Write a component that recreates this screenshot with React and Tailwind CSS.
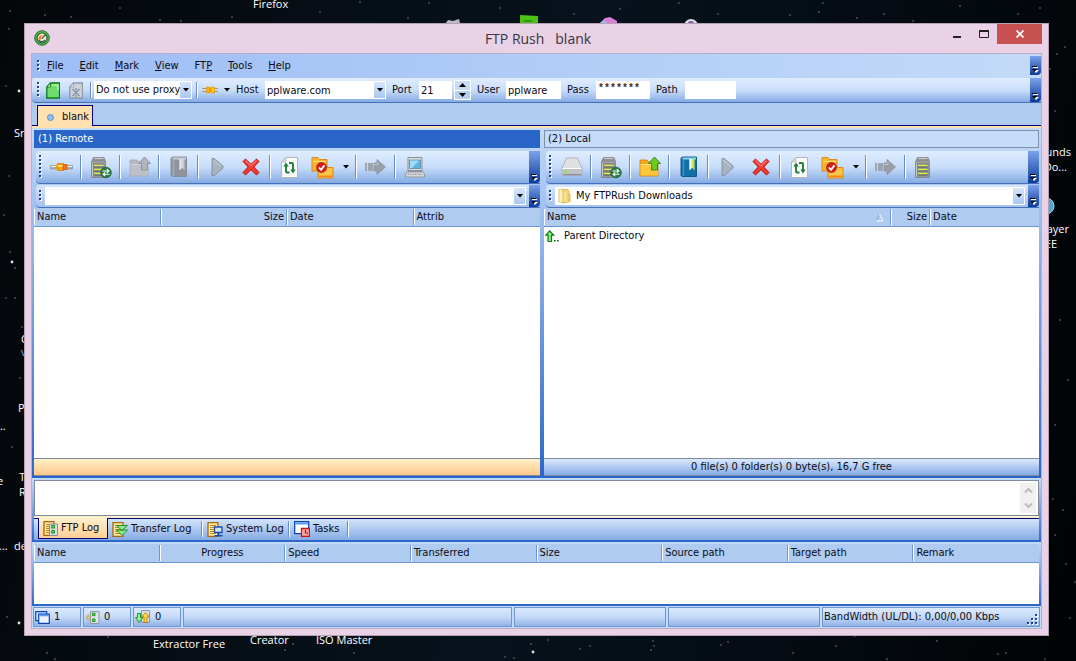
import React from "react";

/* ---------- desktop ---------- */

const STARS = [
  [10, 11, 1], [45, 15, 1], [9, 29, 1], [160, 20, 1], [232, 17, 1], [181, 21, 1], [71, 17, 1], [360, 2, 1], [429, 3, 1],
  [408, 18, 1], [574, 14, 1], [679, 3, 1], [718, 14, 1], [790, 15, 1], [819, 12, 1], [884, 14, 1], [857, 18, 1],
  [1018, 14, 1], [823, 3, 1], [913, 21, 1], [1057, 54, 1], [1065, 47, 1], [1055, 111, 1], [1050, 69, 1], [19, 91, 2], [6, 86, 1],
  [12, 262, 2], [10, 252, 1], [15, 268, 1], [6, 298, 1], [15, 298, 1], [22, 327, 1], [19, 623, 2], [7, 617, 1],
  [47, 653, 1], [55, 659, 1], [108, 637, 1], [285, 650, 1], [293, 644, 1], [354, 653, 1], [533, 652, 2], [548, 640, 1],
  [531, 644, 1], [580, 649, 1], [590, 646, 1], [653, 641, 1], [654, 646, 1], [651, 650, 1], [505, 657, 1], [514, 658, 1],
  [721, 645, 1], [728, 642, 1], [793, 653, 1], [836, 646, 1], [855, 636, 1], [887, 659, 1], [937, 641, 1],
  [998, 654, 1], [1006, 653, 1], [1045, 659, 1], [1063, 510, 1], [1053, 499, 1], [1075, 582, 1], [1066, 564, 1],
  [1055, 535, 1], [1070, 618, 1], [1060, 320, 1], [1068, 380, 1], [1055, 425, 1], [20, 378, 1], [12, 447, 1], [4, 215, 1],
  [9, 176, 1], [120, 8, 1], [320, 12, 1], [500, 8, 1], [960, 6, 1], [1040, 8, 1], [620, 9, 1],
];

function Desktop() {
  const label = "absolute text-center text-[11px] leading-[15px] whitespace-nowrap";
  return (
    <div className="absolute inset-0 overflow-hidden bg-[linear-gradient(100deg,#04070a_0%,#060d14_25%,#07121c_50%,#040a10_80%,#010203_100%)] font-['Open_Sans',sans-serif] text-white">
      <svg className="absolute inset-0" width="1076" height="661" aria-hidden="true">
        {STARS.map(([x, y, r], i) => (
          <circle key={i} cx={x} cy={y} r={r * 0.7} fill={r > 1 ? "#d5e2ee" : "#8795a3"} />
        ))}
        <path d="M446 23l2-3 5 1 6-2 1 4z" fill="#b9bcc0" />
        <path d="M520 15l18 1v8h-18z" fill="#4cc417" />
        <path d="M524 21h8" stroke="#1d6a06" strokeWidth="1" />
        <path d="M600 23l5-5 5-1 7 4v2z" fill="#d87fd8" />
        <path d="M600 23l4-3 3 3z" fill="#8fc4ec" />
        <circle cx="691" cy="26" r="7" fill="#dcdce4" />
        <circle cx="691" cy="24" r="3" fill="#7b5ba8" />
        <circle cx="1046" cy="206" r="8" fill="#49a9cf" stroke="#a9d9ea" />
      </svg>
      <span className={`${label} left-[253px] -top-[4px]`}>Firefox</span>
      <span className={`${label} left-[153px] top-[636px]`}>Extractor Free</span>
      <span className={`${label} left-[250px] top-[632px]`}>Creator</span>
      <span className={`${label} left-[316px] top-[632px]`}>ISO Master</span>
      <span className={`${label} left-[14px] top-[125px]`}>Sr</span>
      <span className={`${label} left-[21px] top-[331px]`}>C</span>
      <span className={`${label} left-[21px] top-[344px] text-[#6db6e8]`}>v</span>
      <span className={`${label} left-[18px] top-[400px]`}>P</span>
      <span className={`${label} -left-[3px] top-[418px]`}>...</span>
      <span className={`${label} -left-[3px] top-[473px]`}>e</span>
      <span className={`${label} left-[19px] top-[469px]`}>T<br />R</span>
      <span className={`${label} -left-[1px] top-[538px]`}>...</span>
      <span className={`${label} left-[14px] top-[538px]`}>de</span>
      <span className={`${label} right-[5px] top-[144px]`}>Sounds</span>
      <span className={`${label} right-[9px] top-[159px]`}>Do...</span>
      <span className={`${label} right-[7px] top-[221px]`}>Player</span>
      <span className={`${label} right-[19px] top-[236px]`}>FREE</span>
    </div>
  );
}

/* ---------- small parts ---------- */

function Grip({ dots = 4 }) {
  return (
    <svg className="shrink-0" width="4" height={dots * 4} aria-hidden="true">
      {Array.from({ length: dots }, (_, i) => (
        <g key={i}>
          <rect x="1" y={i * 4 + 1} width="2" height="2" fill="#fff" />
          <rect x="0" y={i * 4} width="2" height="2" fill="#27418a" />
        </g>
      ))}
    </svg>
  );
}

function Caret() {
  return (
    <svg width="6" height="4" aria-hidden="true">
      <path d="M0 0h6L3 3.500z" fill="#000" />
    </svg>
  );
}

function Sep() {
  return <span className="mx-[2px] h-6 w-[2px] shrink-0 border-l border-r border-l-[#6a8ccb] border-r-white" />;
}

function Overflow({ className = "" }) {
  return (
    <button
      aria-label="Toolbar options"
      className={`flex w-[11px] shrink-0 items-end justify-center self-stretch rounded-br-sm bg-gradient-to-b from-[#7ba2ec] to-[#0a3a98] pb-[2px] ${className}`}
    >
      <svg width="7" height="7" aria-hidden="true">
        <path d="M1 1.500h5" stroke="#fff" />
        <path d="M0 .5h5" stroke="#000" />
        <path d="M1 4h6L4 7z" fill="#fff" />
        <path d="M0 3h5L2.500 6z" fill="#000" />
      </svg>
    </button>
  );
}

function DropCap() {
  return (
    <span className="pointer-events-none absolute inset-y-[1px] right-[1px] flex w-[11px] items-center justify-center bg-gradient-to-b from-[#d6e6fc] to-[#aac8f0]">
      <Caret />
    </span>
  );
}

/* ---------- icons ---------- */

const PlugIcon = () => (
  <svg width="23" height="12" viewBox="0 0 23 12" aria-hidden="true">
    <path d="M.4 4.500h6v3.500h-6zM16.500 4.500h6v3.500h-6z" fill="#a9adb2" stroke="#85898f" strokeWidth=".6" />
    <path d="M1 5.500h5M17 5.500h5" stroke="#f1f2f3" />
    <path d="M6 3.500h2v5H6z" fill="#f8a514" />
    <path d="M7.500 2.500h6v7h-6z" fill="#f9a01a" stroke="#e07a08" strokeWidth=".8" />
    <path d="M13 3.500h4v5h-4z" fill="#f0701a" stroke="#d05a06" strokeWidth=".8" />
    <path d="M7.500 5h5" stroke="#ffe88a" strokeWidth="1.500" />
  </svg>
);

const SmallPlugIcon = () => (
  <svg width="16" height="10" viewBox="0 0 16 10" aria-hidden="true">
    <path d="M0 3.500h5M0 6.500h5M11 3.500h5M11 6.500h5" stroke="#a39a86" />
    <path d="M4.500 2h3v6h-3z" fill="#ffb400" stroke="#e08a00" strokeWidth=".6" />
    <path d="M9 2h3.500v6H9z" fill="#ffcc00" stroke="#e08a00" strokeWidth=".6" />
    <path d="M7.500 3h1.500v4H7.500z" fill="#ff8a00" />
  </svg>
);

const ServerIcon = ({ sync }) => (
  <svg width="22" height="23" viewBox="0 0 22 23" aria-hidden="true">
    <path d="M3.500 1.500h10.500l1.500 4.500v15.500h-14V6z" fill="#9fa1a4" stroke="#7a7d80" strokeWidth=".8" />
    <path d="M3.500 1.500h10.500l1.500 4h-14z" fill="#8b8d90" />
    <path d="M4 2.500h9.500" stroke="#c8cacc" strokeWidth="1.200" />
    <path d="M2.500 7h12v13.500h-12z" fill="#85878a" />
    <path d="M2.500 7v13.500" stroke="#c4c6c8" />
    <path d="M4 9.500h9.500M4 13.500h9.500M4 17.500h9.500" stroke="#dff04a" strokeWidth="1.500" />
    <path d="M4 11h9.500M4 15h9.500M4 19h9.500" stroke="#5c5f62" strokeWidth=".8" />
    {sync && (
      <g>
        <circle cx="16" cy="16.500" r="5.300" fill="#2a7d40" stroke="#14592a" strokeWidth=".7" />
        <path d="M12.500 15H18M16.800 13.100L19 15l-2.200 1.900M19.500 18.300H14M15.200 16.500L13 18.300l2.200 1.900" fill="none" stroke="#fff" strokeWidth="1.100" />
      </g>
    )}
  </svg>
);

const FolderUpIcon = ({ off }) => (
  <svg width="22" height="22" viewBox="0 0 22 22" aria-hidden="true">
    <path d="M1 4h7l2 2h9v14H1z" fill={off ? "#b4b9c1" : "#f3a81b"} stroke={off ? "#a3a9b2" : "#cf7f0a"} strokeWidth=".8" />
    <path d="M1.500 8h17.500v11.500H1.500z" fill={off ? "#bcc1c9" : "#fdc73c"} />
    <path d="M2 8.500h16" stroke={off ? "#d3d7dd" : "#ffe68d"} />
    <path d="M15.500 1l6 6.500h-3V14h-6V7.500h-3z" fill={off ? "#b0b5bd" : "#6ccc24"} stroke={off ? "#8b919b" : "#2c860f"} strokeWidth=".9" />
  </svg>
);

const BookIcon = ({ off }) => (
  <svg width="18" height="22" viewBox="0 0 18 22" aria-hidden="true">
    <path d="M1 2.500C1 1.500 2 1 3 1h13.500v19.500H3c-1 0-2-.5-2-1.500z" fill={off ? "#8f949c" : "#126fa8"} stroke={off ? "#858b95" : "#0a5484"} strokeWidth=".9" />
    <path d="M2.500 1.500h13.500v2H2.500z" fill={off ? "#c7ccd3" : "#8dd4f0"} />
    <path d="M3.500 4v16" stroke={off ? "#a8adb5" : "#3499cf"} strokeWidth="1.500" />
    <path d="M9.500 3h5v11.500L12 11.500l-2.500 3z" fill={off ? "#cdd1d7" : "#c9e84f"} />
    <path d="M9.500 3h2v9.200l-2 1.800z" fill={off ? "#e2e5e9" : "#fff"} />
  </svg>
);

const PlayIcon = () => (
  <svg width="13" height="20" viewBox="0 0 13 20" aria-hidden="true">
    <path d="M1 1.500h2l9 7.500v2l-9 7.500H1z" fill="#a9b3c2" stroke="#828c9b" strokeWidth=".9" />
    <path d="M2 3l8 6.500" stroke="#ccd3dd" />
  </svg>
);

const DeleteIcon = () => (
  <svg width="18" height="18" viewBox="0 0 18 18" aria-hidden="true">
    <path d="M3.500 1L9 6.300 14.500 1 17 3.500 11.800 9 17 14.500 14.500 17 9 11.700 3.500 17 1 14.500 6.200 9 1 3.500z" fill="#ee3a32" stroke="#c01613" strokeWidth="1" strokeLinejoin="round" />
    <path d="M3.500 2.600L9 8l5.500-5.400" fill="none" stroke="#ff8178" strokeWidth="1.100" />
  </svg>
);

const RefreshDocIcon = () => (
  <svg width="17" height="21" viewBox="0 0 17 21" aria-hidden="true">
    <path d="M5 .5h11.500v20H.5V5z" fill="#fbfbfa" stroke="#b3b6b8" />
    <path d="M5 .5V5H.5z" fill="#d9dbdc" stroke="#b3b6b8" strokeWidth=".7" />
    <path d="M8.500 15.500H6c-.8 0-1-.4-1-1V8M8 6h3c.8 0 1 .4 1 1v7" fill="none" stroke="#1c7f3a" strokeWidth="1.900" />
    <path d="M2.300 9.500L5 5.500l2.700 4zM9.300 12.500l2.700 4 2.700-4z" fill="#1c7f3a" />
  </svg>
);

const FolderCheckIcon = () => (
  <svg width="23" height="23" viewBox="0 0 23 23" aria-hidden="true">
    <path d="M1 1.500h6L8.500 3.500H16v11.500H1z" fill="#fbb62a" stroke="#dd8212" strokeWidth=".9" />
    <path d="M2 5.500h13" stroke="#ffe08a" />
    <path d="M7 9.500h5l1.500 2H22v10.500H7z" fill="#fdc541" stroke="#dd8212" strokeWidth=".9" />
    <path d="M8 19.500h13.500v1.500H8z" fill="#f28c18" />
    <circle cx="10.500" cy="11.500" r="5" fill="#d61f1a" stroke="#a01512" strokeWidth=".7" />
    <path d="M7.800 11.500l2.200 2.300 3.400-4.400" fill="none" stroke="#fff" strokeWidth="1.800" />
  </svg>
);

const ArrowIcon = () => (
  <svg width="23" height="18" viewBox="0 0 23 18" aria-hidden="true">
    <path d="M1 5h2v8H1zM4 5h5v8H4z" fill="#9da5b0" />
    <path d="M10 5h3V1.500l8.500 7.500-8.500 7.500V13h-3z" fill="#989fa9" stroke="#8a919c" strokeWidth=".8" />
    <path d="M10 6.500h4V4" fill="none" stroke="#c0c6ce" />
  </svg>
);

const ComputerIcon = () => (
  <svg width="20" height="22" viewBox="0 0 20 22" aria-hidden="true">
    <path d="M3 1.500h14v13H3z" fill="#dcdee0" stroke="#8b8e92" />
    <path d="M4.500 4h11v8.500h-11z" fill="#5cb6e4" stroke="#4d7d9e" strokeWidth=".7" />
    <path d="M5 4.500h9l-7 7.500H5z" fill="#a3daf4" />
    <path d="M2 15.500h16l1.500 3v2.500H.5v-2.500z" fill="#d7d9db" stroke="#85888c" strokeWidth=".8" />
    <path d="M3 16.700h14M2.500 18.500h15" stroke="#9a9ea3" strokeDasharray="1.500 .8" />
  </svg>
);

const DriveIcon = () => (
  <svg width="22" height="20" viewBox="0 0 22 20" aria-hidden="true">
    <path d="M5.500 1h11l4.500 10v6a1.500 1.500 0 0 1-1.500 1.500h-17A1.500 1.500 0 0 1 1 17v-6z" fill="#dfe0e1" stroke="#a4a7ab" strokeWidth=".8" />
    <path d="M1.400 11.500h19.200v5.500a1 1 0 0 1-1 1h-17.200a1 1 0 0 1-1-1z" fill="#bfc2c5" />
    <path d="M1.500 11.500h19" stroke="#fff" />
    <path d="M1.500 17.700h19" stroke="#85888c" />
    <circle cx="4.500" cy="14.500" r="1.300" fill="#8de62c" />
  </svg>
);

const FolderIcon = () => (
  <svg width="14" height="16" viewBox="0 0 14 16" aria-hidden="true">
    <path d="M1 1.500L6 1v14l-5-1z" fill="#fdf0b4" stroke="#d9b654" strokeWidth=".8" />
    <path d="M5 1.500h5l1 2V14l-6 1z" fill="#f2d675" stroke="#d9b654" strokeWidth=".8" />
    <path d="M11 6h1.500v8H11z" fill="#e4bf55" />
    <path d="M7 4v9" stroke="#fff3bd" />
  </svg>
);

const DocIcon = ({ off }) => (
  <svg width="14" height="17" viewBox="0 0 14 17" aria-hidden="true">
    <path d="M4.500 1h9v15H.8V5z" fill={off ? "#ccd3dc" : "#6fdc6c"} stroke={off ? "#8d98a6" : "#0b7a17"} strokeWidth="1.300" />
    <path d="M4.500 1v4H.8z" fill={off ? "#f2f4f6" : "#d2f7cf"} stroke={off ? "#8d98a6" : "#0b7a17"} strokeWidth=".8" />
    {off ? (
      <path d="M3.500 7l7 7M10.500 7l-7 7M7 6v2M7 13v2" stroke="#8c96a3" strokeWidth="1.600" />
    ) : (
      <path d="M6 3h6v5" fill="none" stroke="#b4f5ac" strokeWidth="1.500" />
    )}
  </svg>
);

const AppIcon = () => (
  <svg width="16" height="16" viewBox="0 0 16 16" aria-hidden="true">
    <circle cx="8" cy="8" r="7.300" fill="#58b950" stroke="#2b7431" strokeWidth="1" />
    <circle cx="8" cy="8" r="5" fill="#f1f4ec" stroke="#1c6426" strokeWidth="1.200" />
    <path d="M11.500 4.500L8 8.500M11 9.800A3.500 3.500 0 0 1 5 10" fill="none" stroke="#494d48" strokeWidth="1.200" />
    <path d="M4.500 10c-.3-3.500 1.500-5.300 5-5.500L7 6.500 8 9z" fill="#f47c1b" />
  </svg>
);

const LogSheet = () => (
  <g>
    <path d="M1 .7h10v13.600H1z" fill="#ffe9a6" stroke="#a8690e" strokeWidth="1.300" />
    <path d="M3 3.500h6M3 5.500h6M3 7.500h6M3 9.500h6M3 11.500h6" stroke="#c98618" />
  </g>
);

const FtpLogIcon = () => (
  <svg width="15" height="15" viewBox="0 0 15 15" aria-hidden="true">
    <LogSheet />
    <path d="M6.500 3h8v11.500h-8z" fill="#d6dbe0" stroke="#8b939b" />
    <path d="M8.800 4.500h2.600v2.600H8.800zM8.800 9.500h2.600v2.600H8.800z" fill="#5fe064" stroke="#0c8a16" strokeWidth=".9" />
  </svg>
);

const TransferLogIcon = () => (
  <svg width="16" height="15" viewBox="0 0 16 15" aria-hidden="true">
    <LogSheet />
    <path d="M4.500 3.500h11L10 8.500zM4.500 8h11L10 13.500z" fill="#8deb89" stroke="#128a20" strokeWidth=".9" />
  </svg>
);

const SystemLogIcon = () => (
  <svg width="16" height="15" viewBox="0 0 16 15" aria-hidden="true">
    <LogSheet />
    <path d="M7.500 5h7.500v5.500H7.500z" fill="#cfe4ff" stroke="#1b4db0" strokeWidth="1.300" />
    <path d="M11.500 11v2M7.500 13.700h8" stroke="#1b4db0" strokeWidth="1.500" />
  </svg>
);

const TasksIcon = () => (
  <svg width="16" height="16" viewBox="0 0 16 16" aria-hidden="true">
    <path d="M.7.7h14v12H.7z" fill="#fff" stroke="#0d47b5" strokeWidth="1.300" />
    <path d="M1.300 1.300h12.800v2.200H1.300z" fill="#5e9bf2" />
    <path d="M7.500 7.500h8v8h-8z" fill="#f8aaa6" stroke="#d01414" strokeWidth="1.300" />
    <path d="M11.500 9v3h2.500" fill="none" stroke="#b30d0d" strokeWidth="1.200" />
  </svg>
);

const WindowsIcon = () => (
  <svg width="15" height="13" viewBox="0 0 15 13" aria-hidden="true">
    <path d="M.7.7h11v9h-11z" fill="#cfe2ff" stroke="#0d47b5" strokeWidth="1.200" />
    <path d="M3.700 3.200h10.600v9.100H3.700z" fill="#eef5ff" stroke="#0d47b5" strokeWidth="1.200" />
    <path d="M4.300 4.500h9.400" stroke="#5e9bf2" strokeWidth="1.600" />
  </svg>
);

const ConnIcon = () => (
  <svg width="15" height="13" viewBox="0 0 15 13" aria-hidden="true">
    <path d="M5.500.6h8.500v11.800H5.500z" fill="#dfe4e8" stroke="#8b939b" />
    <path d="M7.500 2.200h2.500v2.500H7.500zM7.500 8h2.500v2.500H7.500z" fill="#5fe064" stroke="#0c8a16" strokeWidth=".9" />
    <path d="M4 3.500L1 6.500l3 3M2 5.200h2.500M2 7.800h2.500" fill="none" stroke="#d69a06" />
  </svg>
);

const UpDownIcon = () => (
  <svg width="16" height="14" viewBox="0 0 16 14" aria-hidden="true">
    <path d="M6.500.6h8v11.800h-8z" fill="#dfe4e8" stroke="#8b939b" />
    <path d="M2.500 3.500h3v4H8L4 12.500 .5 7.500h2z" fill="#9af08e" stroke="#128a20" strokeWidth=".9" />
    <path d="M9 12.500h3V7h2.500l-4-4.500-4 4.500H9z" fill="#ffd54a" stroke="#b9780b" strokeWidth=".9" />
  </svg>
);

const ParentIcon = () => (
  <svg width="14" height="13" viewBox="0 0 14 13" aria-hidden="true">
    <path d="M4.700 1l4 4.200H6.500V11.500H3V5.200H.8z" fill="#8ae884" stroke="#0d7d1b" strokeWidth="1.200" />
    <path d="M9 10h1.600v1.600H9zM12 10h1.600v1.600H12z" fill="#0a6a16" />
  </svg>
);

/* ---------- top bars ---------- */

const MENUS = [["F", "ile"], ["E", "dit"], ["M", "ark"], ["V", "iew"], ["FT", "P"], ["T", "ools"], ["H", "elp"]];

function MenuBar() {
  return (
    <nav className="flex h-6 items-center bg-gradient-to-r from-[#9ebdf5] to-[#c3daf8] pl-[5px]">
      <Grip dots={3} />
      <div className="flex flex-1 gap-4 pl-[6px]">
        {MENUS.map(([a, b]) => (
          <button key={a + b}>
            {a === "FT" ? <>FT<u>P</u></> : <><u>{a}</u>{b}</>}
          </button>
        ))}
      </div>
      <Overflow className="mt-[2px] mb-[3px]" />
    </nav>
  );
}

const field = "h-[18px] bg-white px-[2px] outline-none";

function QuickConnect() {
  return (
    <div className="flex h-[25px] items-center rounded-l border-b border-[#4671b8] bg-[linear-gradient(#dfecfe,#cadefa_50%,#85abe4)] pl-[5px]">
      <Grip dots={4} />
      <button aria-label="New" className="ml-1 flex w-[15px] justify-center"><DocIcon /></button>
      <button aria-label="Close" className="ml-2 mr-[7px] flex w-[15px] justify-center"><DocIcon off /></button>
      <span className="h-4 w-[2px] shrink-0 border-l border-r border-l-[#6a8ccb] border-r-white" />
      <div className="relative ml-[2px] w-[98px]">
        <select aria-label="Proxy" className={`${field} block w-full appearance-none whitespace-nowrap`}>
          <option>Do not use proxy</option>
        </select>
        <DropCap />
      </div>
      <span className="ml-1 mr-1 h-4 w-[2px] shrink-0 border-l border-r border-l-[#6a8ccb] border-r-white" />
      <button aria-label="Connect" className="flex w-[32px] items-center gap-[6px]">
        <SmallPlugIcon />
        <Caret />
      </button>
      <label htmlFor="host" className="w-[31px] pl-[2px]">Host</label>
      <div className="relative w-[121px]">
        <input id="host" className={`${field} block w-full pr-4`} defaultValue="pplware.com" />
        <DropCap />
      </div>
      <label htmlFor="port" className="ml-[6px] w-[27px]">Port</label>
      <input id="port" className={`${field} w-[33px]`} defaultValue="21" />
      <div className="ml-[2px] flex h-5 w-[17px] flex-col gap-[1px] border border-white bg-white">
        <button aria-label="Increase port" className="flex flex-1 items-center justify-center bg-[#c8dcf8]">
          <svg width="7" height="4" aria-hidden="true"><path d="M0 4h7L3.500 0z" /></svg>
        </button>
        <button aria-label="Decrease port" className="flex flex-1 items-center justify-center bg-[#b5cff3]">
          <svg width="7" height="4" aria-hidden="true"><path d="M0 0h7L3.500 4z" /></svg>
        </button>
      </div>
      <label htmlFor="user" className="ml-[6px] w-[29px]">User</label>
      <input id="user" className={`${field} w-[55px]`} defaultValue="pplware" />
      <label htmlFor="pass" className="ml-[6px] w-[29px]">Pass</label>
      <input id="pass" className={`${field} w-[54px] pb-1 font-['Liberation_Mono',monospace] text-[10px] font-bold text-[#4a2a10]`} defaultValue="*******" />
      <label htmlFor="path" className="ml-[6px] w-[29px]">Path</label>
      <input id="path" className={`${field} w-[51px]`} defaultValue="" />
      <Overflow className="ml-auto" />
    </div>
  );
}

/* ---------- panes ---------- */

function ToolButton({ name, children }) {
  return (
    <button aria-label={name} className="flex h-full w-[33px] shrink-0 items-center justify-center">
      {children}
    </button>
  );
}

function PaneToolbar({ local }) {
  return (
    <div className="mt-[3px] ml-[2px] flex h-[33px] items-center rounded-l border-b border-[#4671b8] bg-[linear-gradient(#e0edff,#c8ddfa_50%,#85abe4)] pl-[3px]">
      <div className="w-[6px] shrink-0"><Grip dots={6} /></div>
      <ToolButton name={local ? "Drives" : "Connect"}>{local ? <DriveIcon /> : <PlugIcon />}</ToolButton>
      <Sep />
      <ToolButton name="Sites"><ServerIcon sync /></ToolButton>
      <Sep />
      <ToolButton name="Parent folder"><FolderUpIcon off={!local} /></ToolButton>
      <Sep />
      <ToolButton name="Bookmarks"><BookIcon off={!local} /></ToolButton>
      <Sep />
      <ToolButton name="Start"><PlayIcon /></ToolButton>
      <ToolButton name="Delete"><DeleteIcon /></ToolButton>
      <Sep />
      <ToolButton name="Refresh"><RefreshDocIcon /></ToolButton>
      <ToolButton name="Select"><FolderCheckIcon /></ToolButton>
      <button aria-label="Select options" className="flex h-full w-[14px] shrink-0 items-center justify-center"><Caret /></button>
      <Sep />
      <ToolButton name="Transfer"><ArrowIcon /></ToolButton>
      <Sep />
      <ToolButton name={local ? "Server" : "Computer"}>{local ? <ServerIcon /> : <ComputerIcon />}</ToolButton>
      <Overflow className="ml-auto" />
    </div>
  );
}

function AddressBar({ local }) {
  return (
    <div className="mt-[1px] ml-[2px] flex h-[23px] items-center rounded-l border-b border-[#4671b8] bg-[linear-gradient(#d6e6fd,#a3c1ee)] pl-[3px]">
      <Grip dots={3} />
      <div className="relative ml-[2px] mr-[3px] flex h-[18px] flex-1 items-center bg-white">
        {local && <span className="pl-[3px]"><FolderIcon /></span>}
        <select aria-label={local ? "Local folder" : "Remote folder"} className="h-full flex-1 appearance-none pl-1 outline-none">
          <option>{local ? "My FTPRush Downloads" : ""}</option>
        </select>
        <DropCap />
      </div>
      <Overflow />
    </div>
  );
}

function HeadCell({ children, align = "justify-start", sorted, first }) {
  return (
    <th scope="col" className="h-[19px] border-b border-[#6b94d9] bg-[#b0cbf0] p-0 font-normal">
      <div className={`flex h-4 items-center border-l border-white pr-[3px] pl-[2px] ${align} ${first ? "" : "shadow-[-1px_0_0_#6b94d9]"}`}>
        {children}
        {sorted && (
          <svg className="mr-1 ml-auto" width="9" height="9" aria-hidden="true">
            <path d="M4.500 1L1 8" fill="none" stroke="#7f9fd4" />
            <path d="M4.500 1L8 8H1" fill="none" stroke="#fff" />
          </svg>
        )}
      </div>
    </th>
  );
}

function Pane({ local }) {
  const cols = local
    ? [["Name", "w-[70%]"], ["Size", "w-[8%]"], ["Date", "w-[22%]"]]
    : [["Name", "w-[25%]"], ["Size", "w-[25%]"], ["Date", "w-[25%]"], ["Attrib", "w-[25%]"]];
  return (
    <section className="flex min-w-0 flex-col">
      <h2 className={`flex h-[18px] shrink-0 items-center px-1 ${local ? "border border-[#7f8fa9] bg-[#c4dbf9] pl-[3px]" : "bg-[#2a66c9] text-white"}`}>
        {local ? "(2) Local" : "(1) Remote"}
      </h2>
      <PaneToolbar local={local} />
      <AddressBar local={local} />
      <div className="flex-1 bg-white">
        <table className="w-full table-fixed border-separate border-spacing-0">
          <colgroup>{cols.map(([n, w]) => <col key={n} className={w} />)}</colgroup>
          <thead>
            <tr>
              {cols.map(([n], i) => (
                <HeadCell key={n} first={i === 0} sorted={local && i === 0} align={n === "Size" ? "justify-end" : "justify-start"}>
                  {n}
                </HeadCell>
              ))}
            </tr>
          </thead>
          <tbody>
            {local && (
              <tr>
                <td className="h-[18px] p-0">
                  <div className="flex items-center gap-[5px] pl-[1px]"><ParentIcon />Parent Directory</div>
                </td>
                <td /><td />
              </tr>
            )}
          </tbody>
        </table>
      </div>
      <div className={`flex h-[18px] shrink-0 items-center justify-center border-y border-[#7f8b9d] ${local ? "bg-gradient-to-b from-[#dae9fd] to-[#85abe4]" : "bg-gradient-to-b from-[#fff0c8] to-[#ffc98a]"}`}>
        {local && "0 file(s) 0 folder(s) 0 byte(s), 16,7 G free"}
      </div>
    </section>
  );
}

/* ---------- bottom ---------- */

const frame = "bg-gradient-to-b from-[#c4dbf9] to-[#2a66c9] px-[2px] pt-[2px] pb-[2px]";

function LogArea() {
  return (
    <section className={`flex h-16 shrink-0 flex-col ${frame}`}>
      <div className="flex h-9 border border-[#7f8b9d] bg-white py-[2px] pr-[2px]">
        <textarea aria-label="Log" readOnly className="flex-1 resize-none outline-none" />
        <div className="flex w-4 flex-col justify-between bg-[#f0f0f0] py-1">
          <button aria-label="Scroll up" className="flex justify-center">
            <svg width="9" height="7" aria-hidden="true"><path d="M1 5.500l3.500-3.500L8 5.500" fill="none" stroke="#bcbcbc" strokeWidth="2" /></svg>
          </button>
          <button aria-label="Scroll down" className="flex justify-center">
            <svg width="9" height="7" aria-hidden="true"><path d="M1 1.500L4.500 5 8 1.500" fill="none" stroke="#bcbcbc" strokeWidth="2" /></svg>
          </button>
        </div>
      </div>
      <div className="h-[2px] shrink-0 bg-[#fff0cc]" />
      <div role="tablist" className="flex h-[22px] items-start border-t border-[#000080] bg-gradient-to-b from-[#d3e4fb] to-[#85abe4] pl-1">
        <button role="tab" aria-selected="true" className="-mt-[1px] flex h-[21px] w-[70px] items-center gap-[3px] border border-t-0 border-[#000080] bg-gradient-to-b from-[#fff0cc] to-[#ffcf94] pl-1 whitespace-nowrap">
          <FtpLogIcon />FTP Log
        </button>
        {[["Transfer Log", <TransferLogIcon />, "w-[95px]"], ["System Log", <SystemLogIcon />, "w-[87px]"], ["Tasks", <TasksIcon />, "w-[59px]"]].map(([t, icon, w]) => (
          <div key={t} className={`flex h-5 items-center ${w}`}>
            <button role="tab" aria-selected="false" className="flex flex-1 items-center gap-[3px] pl-1 whitespace-nowrap">{icon}{t}</button>
            <span className="h-4 w-[2px] shrink-0 border-l border-r border-l-[#6a8ccb] border-r-white" />
          </div>
        ))}
      </div>
    </section>
  );
}

function Queue() {
  return (
    <section className={`h-16 shrink-0 ${frame}`}>
      <div className="h-full bg-white">
        <table className="w-full table-fixed border-separate border-spacing-0">
          <thead>
            <tr>
              {["Name", "Progress", "Speed", "Transferred", "Size", "Source path", "Target path", "Remark"].map((n, i) => (
                <HeadCell key={n} first={i === 0} align={n === "Progress" ? "justify-center" : "justify-start"}>{n}</HeadCell>
              ))}
            </tr>
          </thead>
        </table>
      </div>
    </section>
  );
}

function StatusBar() {
  const cell = "flex items-center gap-1 border border-[#7196d0] bg-[linear-gradient(#dbe9fd,#c5daf8_50%,#8fb2e7)] pl-[1px]";
  return (
    <footer className="grid h-[22px] shrink-0 grid-cols-[48px_48px_48px_329fr_152fr_152fr_218fr] gap-x-[2px] bg-[#c4dbf9] px-[1px] pt-[1px] pb-[1px]">
      <span className={cell}><WindowsIcon />1</span>
      <span className={cell}><ConnIcon />0</span>
      <span className={cell}><UpDownIcon />0</span>
      <span className={cell} />
      <span className={cell} />
      <span className={cell} />
      <span className={`${cell} justify-between`}>
        BandWidth (UL/DL): 0,00/0,00 Kbps
        <svg className="self-end" width="12" height="12" aria-hidden="true">
          {[[8, 0], [4, 4], [8, 4], [0, 8], [4, 8], [8, 8]].map(([x, y]) => (
            <g key={`${x}-${y}`}>
              <rect x={x + 1} y={y + 1} width="2" height="2" fill="#fff" />
              <rect x={x} y={y} width="2" height="2" fill="#27418a" />
            </g>
          ))}
        </svg>
      </span>
    </footer>
  );
}

/* ---------- window ---------- */

export default function App() {
  return (
    <div className="relative flex min-h-screen pt-[23px] pr-[27px] pb-[25px] pl-6 font-['DejaVu_Sans_Condensed','DejaVu_Sans',sans-serif] text-[11px] leading-4 text-[#0a0a14]">
      <Desktop />
      <main className="relative flex min-w-0 flex-1 flex-col border border-[#b59fb0] bg-[#e9d1e6] px-[6px] pb-[6px]">
        <header className="flex h-[29px] shrink-0 items-start">
          <div className="flex flex-1 pt-[6px] pl-[3px]"><AppIcon /></div>
          <h1 className="pt-1 font-['Open_Sans',sans-serif] text-[14px] leading-[22px] whitespace-pre text-[#3a3540]">FTP Rush   blank</h1>
          <div className="flex flex-1 justify-end">
            <button aria-label="Minimize" className="flex h-5 w-[27px] items-center justify-center">
              <svg width="8" height="8" aria-hidden="true"><path d="M0 6h8v2H0z" fill="#222" /></svg>
            </button>
            <button aria-label="Maximize" className="flex h-5 w-[27px] items-center justify-center">
              <svg width="10" height="8" aria-hidden="true"><path d="M.5 1v6.500h9V1" fill="none" stroke="#222" /><path d="M0 0h10v2H0z" fill="#222" /></svg>
            </button>
            <button aria-label="Close window" className="flex h-5 w-[45px] items-center justify-center bg-[#c75050]">
              <svg width="8" height="8" aria-hidden="true"><path d="M.5.5l7 7M7.500.5l-7 7" stroke="#fff" strokeWidth="1.700" /></svg>
            </button>
          </div>
        </header>
        <div className="flex flex-1 flex-col border border-[#b9aeca] bg-[#c3daf8]">
          <MenuBar />
          <QuickConnect />
          <div role="tablist" className="flex h-[23px] shrink-0 items-end border-b border-[#000080] bg-[#b0cbf0] pl-[5px]">
            <button role="tab" aria-selected="true" className="-mb-[1px] flex h-[21px] w-14 items-center gap-2 border border-b-0 border-[#000080] bg-[#ffe0ae] pt-[2px] pl-[9px]">
              <svg width="7" height="7" aria-hidden="true"><circle cx="3.500" cy="3.500" r="3" fill="#8fc1f5" stroke="#5d8ac8" /></svg>
              blank
            </button>
          </div>
          <div className="h-[2px] shrink-0 bg-[#ffe0ae]" />
          <div className={`grid flex-1 grid-cols-[506fr_495fr] gap-1 ${frame}`}>
            <Pane />
            <Pane local />
          </div>
          <LogArea />
          <Queue />
          <StatusBar />
        </div>
      </main>
    </div>
  );
}
